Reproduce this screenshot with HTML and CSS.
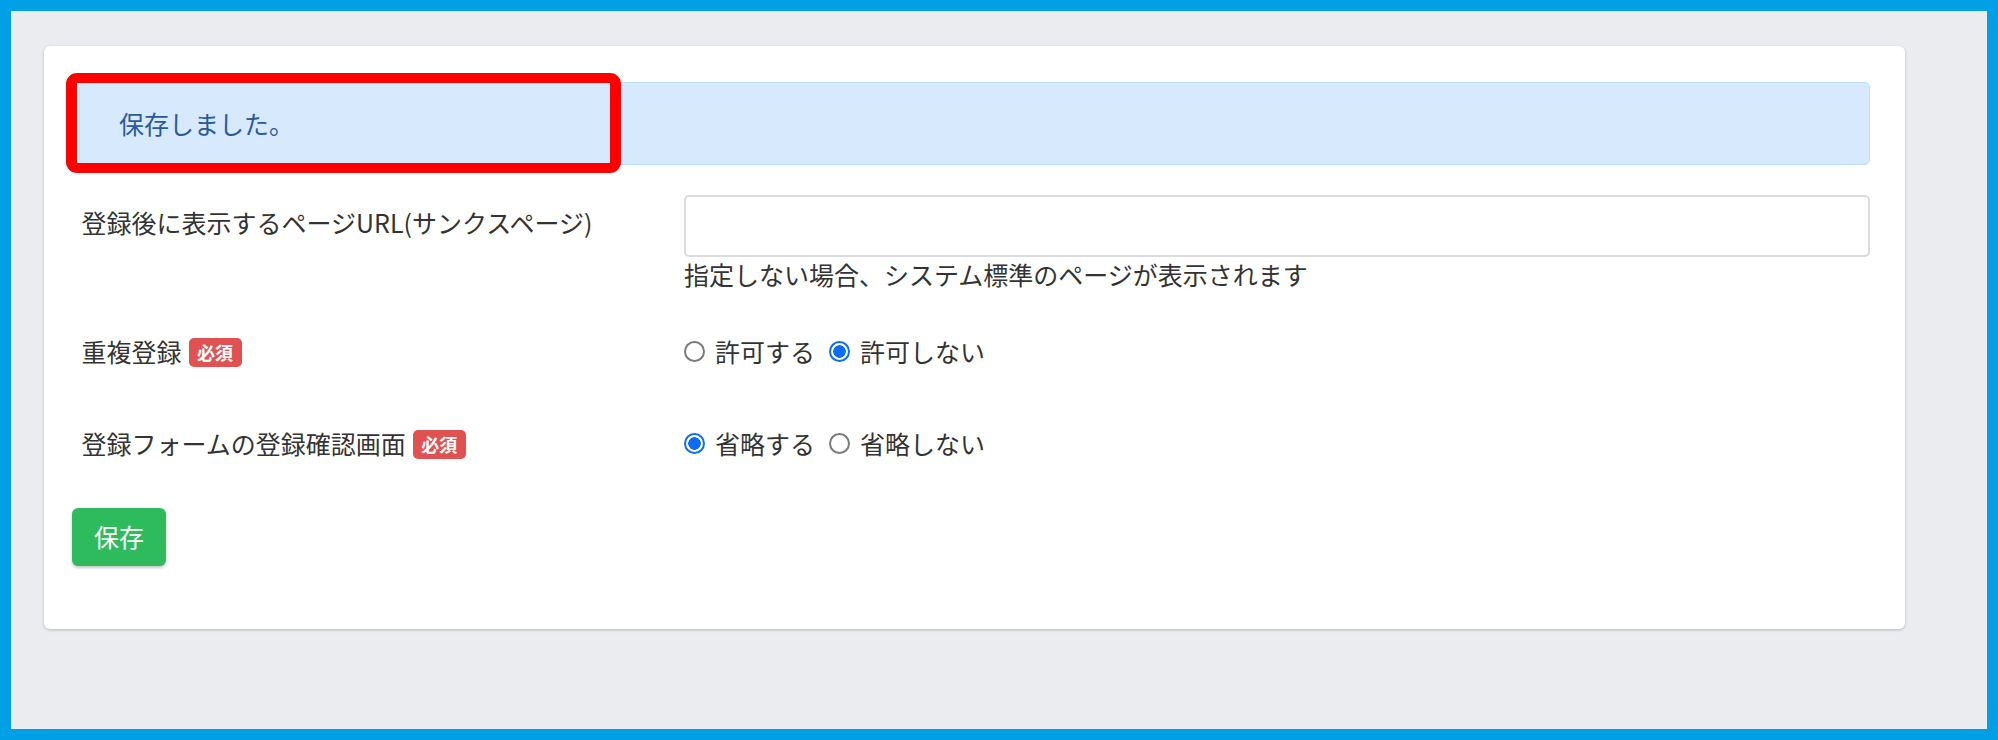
FILE: index.html
```html
<!DOCTYPE html>
<html lang="ja">
<head>
<meta charset="utf-8">
<title>設定</title>
<link rel="stylesheet" href="styles.css">
</head>
<body>
<div class="frame">
  <div class="card">
    <div class="alert">
      保存しました。
      <span class="annotation"></span>
    </div>
    <form class="form">
      <div class="form-row row-url">
        <label class="form-label">登録後に表示するページURL(サンクスページ)</label>
        <div class="form-field">
          <input type="text" class="text-input">
          <div class="help">指定しない場合、システム標準のページが表示されます</div>
        </div>
      </div>
      <div class="form-row row-dup">
        <div class="form-label">重複登録<span class="badge">必須</span></div>
        <div class="form-field radio-group">
          <label class="radio"><input type="radio" name="dup"><span>許可する</span></label>
          <label class="radio"><input type="radio" name="dup" checked><span>許可しない</span></label>
        </div>
      </div>
      <div class="form-row row-confirm">
        <div class="form-label">登録フォームの登録確認画面<span class="badge">必須</span></div>
        <div class="form-field radio-group">
          <label class="radio"><input type="radio" name="confirm" checked><span>省略する</span></label>
          <label class="radio"><input type="radio" name="confirm"><span>省略しない</span></label>
        </div>
      </div>
      <button type="button" class="btn-save">保存</button>
    </form>
  </div>
</div>
</body>
</html>
```
FILE: styles.css
```css
* { box-sizing: border-box; }
html, body { margin: 0; padding: 0; }
body {
  font-family: "Noto Sans CJK JP", "Noto Sans", sans-serif;
  font-size: 25px;
  line-height: 37.5px;
  color: #333;
}
.frame {
  width: 1998px;
  height: 740px;
  border: 11px solid #019fe6;
  background: #ebecef;
  padding: 35px 82px 0 33px;
}
.card {
  background: #fff;
  border-radius: 6px;
  box-shadow: 0 1px 3px rgba(40, 50, 70, 0.28);
  height: 583px;
  padding: 36px 35px 0 35px;
}
.alert {
  position: relative;
  height: 83px;
  background: #d7e9fd;
  border: 1px solid #c1dcf9;
  border-radius: 5px;
  color: #2c5a99;
  padding: 0 39px;
  display: flex;
  align-items: center;
}
.annotation {
  position: absolute;
  left: -14px;
  top: -10px;
  width: 555px;
  height: 100px;
  border: solid #ff0000;
  border-width: 10px 11px;
  border-radius: 11px;
}
.form-row {
  display: grid;
  grid-template-columns: 605px 1fr;
}
.row-url { margin-top: 30px; }
.row-dup { margin-top: 29px; }
.row-confirm { margin-top: 36.5px; }
.form-label {
  padding: 9px 0 9px 2.5px;
  display: flex;
  align-items: flex-start;
  gap: 7px;
  font-weight: normal;
}
.form-label .badge { margin-top: 5px; }
.badge {
  display: inline-block;
  background: #e05151;
  color: #fff;
  font-size: 18px;
  font-weight: bold;
  line-height: 29px;
  height: 29px;
  padding: 0 8.5px;
  border-radius: 5px;
}
.text-input {
  display: block;
  width: 100%;
  height: 62px;
  border: 2px solid #dcdce0;
  border-radius: 5px;
  font: inherit;
  padding: 0 12px;
  background: #fff;
}
.help {
  color: #333;
  line-height: 34px;
  padding-bottom: 3.5px;
}
.radio-group {
  display: flex;
  align-items: center;
  gap: 14px;
  padding: 9px 0;
}
.radio {
  display: flex;
  align-items: center;
  gap: 10px;
}
.radio input {
  appearance: none;
  -webkit-appearance: none;
  width: 21px;
  height: 21px;
  margin: 0;
  border: 2px solid #7a7a7a;
  border-radius: 50%;
  background: #fff;
}
.radio input:checked {
  border: 2px solid #0b6df7;
  background: radial-gradient(circle, #0b6df7 0 6px, #fff 6.5px);
}
.btn-save {
  margin-top: 36.5px;
  margin-left: -7px;
  width: 94px;
  height: 58px;
  background: #2ebb5e;
  color: #fff;
  border: none;
  border-radius: 6px;
  font: inherit;
  line-height: 37.5px;
  padding: 0;
  box-shadow: 0 2px 3px rgba(0, 0, 0, 0.22);
}
```
